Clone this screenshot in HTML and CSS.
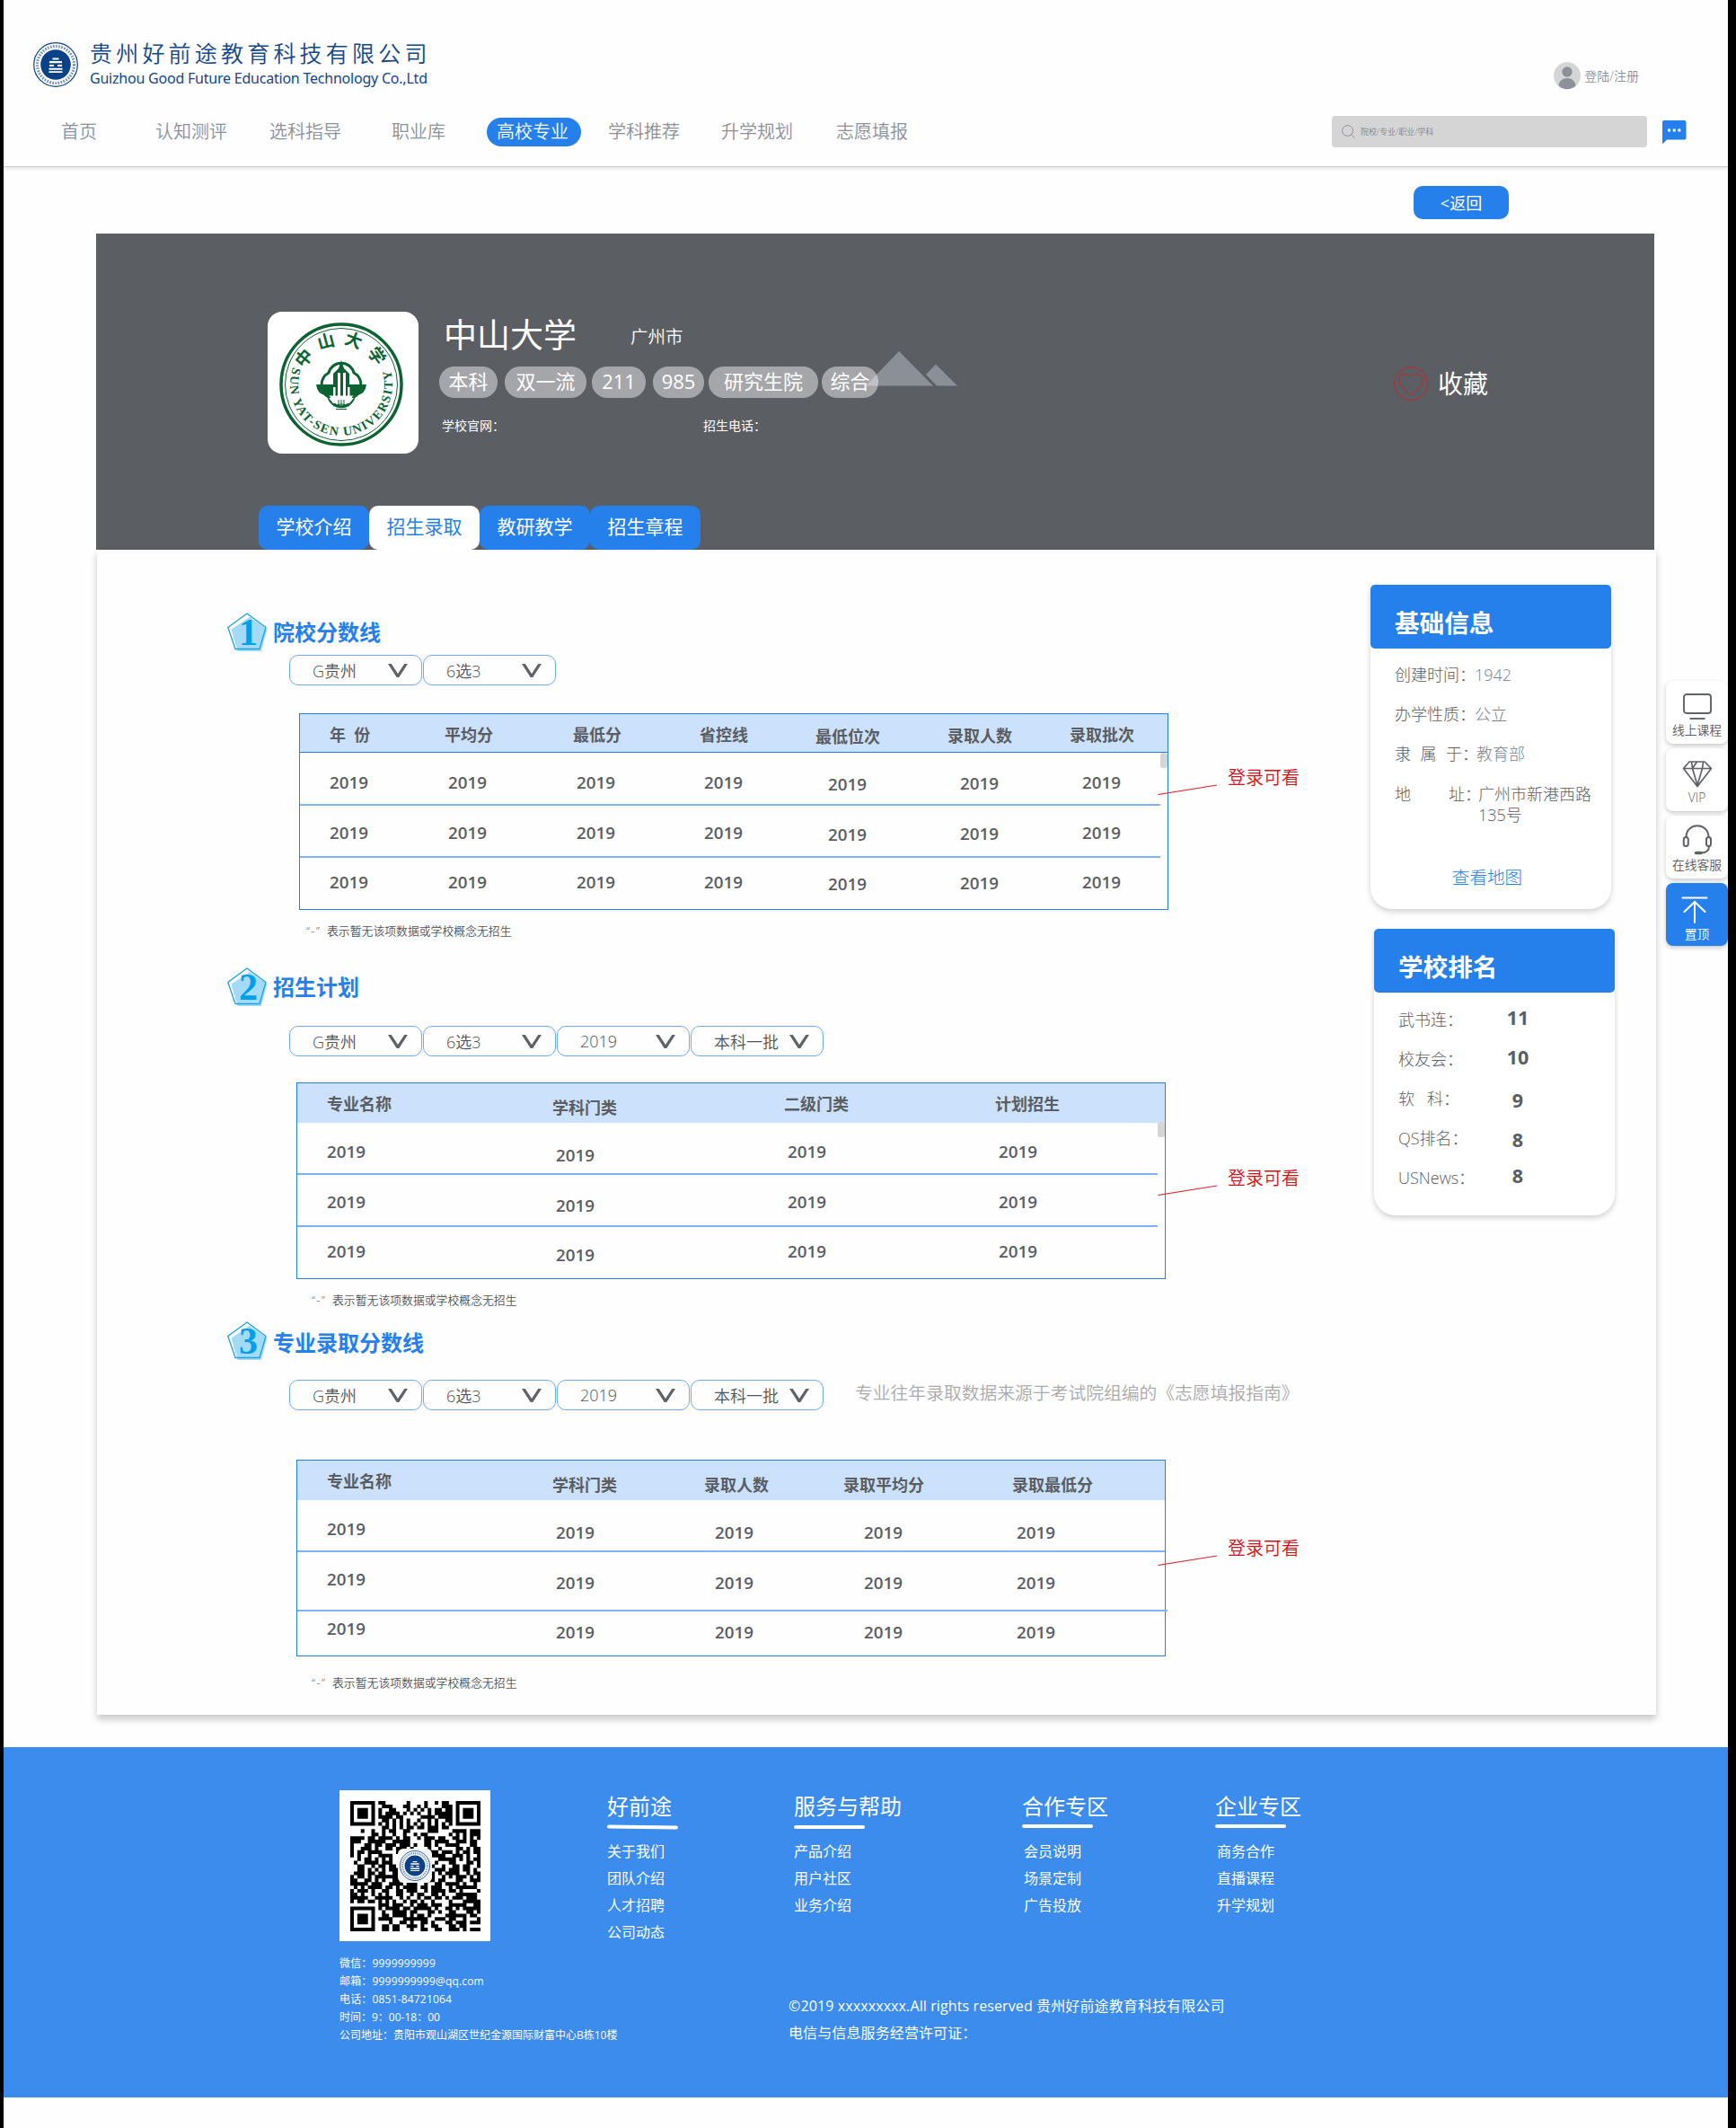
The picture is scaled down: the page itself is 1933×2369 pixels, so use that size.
FILE: index.html
```html
<!DOCTYPE html>
<html lang="zh-CN">
<head>
<meta charset="utf-8">
<title>中山大学 - 招生录取</title>
<link rel="stylesheet" href="styles.css">
</head>
<body>
<svg width="0" height="0" class="defs">
  <defs>
    <symbol id="emblem" viewBox="0 0 50 50">
      <circle cx="25" cy="25" r="24.3" fill="#fff" stroke="#0a4187" stroke-width="1.2"/>
      <circle cx="25" cy="25" r="20.5" fill="none" stroke="#6f8fbb" stroke-width="3.2" stroke-dasharray="1.6 1.5"/>
      <circle cx="25" cy="25" r="16.8" fill="#0a4187"/>
      <path d="M21.500 17.500h7v2h-7zM18 21h14v2.200H18zM18 25h5v2h-5zM27 25h5v2h-5zM17.500 28.800h15v2h-15zM17.500 32.200h15v1.800h-15z" fill="#fff"/>
    </symbol>
    <symbol id="pentagon" viewBox="0 0 46 44">
      <path d="M25 5L44.500 18.500L38 43H11.500L4.500 18.500Z" fill="#a3daf6"/>
      <path d="M22 1L43 16.500L36 40.500H9L.8 16.500Z" fill="none" stroke="#1ea2de" stroke-width="1.300"/>
    </symbol>
    <symbol id="chev" viewBox="0 0 22 15"><path d="M0 0h3.800l7.200 11L18.300 0H22L12.300 15H9.700Z" fill="#5f6266"/></symbol>
  </defs>
</svg>
<div class="page">
  <header class="header">
    <div class="brand">
      <svg class="brand-logo"><use href="#emblem"/></svg>
      <div class="brand-text">
        <div class="brand-cn">贵州好前途教育科技有限公司</div>
        <div class="brand-en">Guizhou Good Future Education Technology Co.,Ltd</div>
      </div>
    </div>
    <a class="login">
      <svg width="30" height="31" viewBox="0 0 30 31"><circle cx="15" cy="15.300" r="15" fill="#d5d5d5"/><circle cx="15" cy="11" r="5.700" fill="#8b9099"/><path d="M5.500 26.500C6 21 10 18 15 18s9 3 9.500 8.500Q20 30.300 15 30.300T5.500 26.500Z" fill="#8b9099"/></svg>
      <span>登陆/注册</span>
    </a>
  </header>
  <nav class="nav">
    <a>首页</a><a>认知测评</a><a>选科指导</a><a>职业库</a><a class="on">高校专业</a><a>学科推荐</a><a>升学规划</a><a>志愿填报</a>
    <div class="search">
      <svg width="15" height="15" viewBox="0 0 15 15" fill="none" stroke="#8b9099"><circle cx="6.500" cy="6.500" r="5.900"/><path d="M10.700 10.700L14.300 14.500"/></svg>
      <span>院校/专业/职业/学科</span>
    </div>
    <svg class="chat" width="27" height="27" viewBox="0 0 27 27"><path d="M2 0h22.500a2 2 0 0 1 2 2v17.500a2 2 0 0 1-2 2H5L0 26.500V2a2 2 0 0 1 2-2Z" fill="#2680eb"/><path d="M6 9.500h3v3H6zM11.700 9.500h3v3h-3zM17.300 9.500h3v3h-3z" fill="#fff"/></svg>
  </nav>
  <div class="back-row"><a class="back">&lt;返回</a></div>

  <section class="banner">
    <div class="school">
      <div class="seal">
        <svg width="168" height="158" viewBox="0 0 168 158">
          <g fill="none" stroke="#0b6332">
            <circle cx="82" cy="81" r="67" stroke-width="3.500"/>
            <circle cx="82" cy="81" r="62.500" stroke-width="1"/>
          </g>
          <path d="M68 68a14.500 14.500 0 0 1 28 0a15.500 15.500 0 0 1 0 27a14.500 14.500 0 0 1-28 0a15.500 15.500 0 0 1 0-27Z" fill="#fff" stroke="#0b6332" stroke-width="3"/>
          <path d="M54 81h19V69l6-6 3-9 3 9 6 6v12h19q-1 11-12 12.500H66Q55 92 54 81Z" fill="#0b6332"/>
          <path d="M78 68h3v28h-3zM84 68h3v28h-3zM73 84h2.500v12H73zM89 84h2.500v12H89zM68 96h28l-5 6H73Z" fill="#fff"/>
          <path d="M73 105q9-4 18 0M76 108.500h12M79 98v6M82 98v6M85 98v6" stroke="#0b6332" fill="none"/>
          <path id="arc-top" d="M38 81a44 44 0 0 1 88 0" fill="none"/>
          <path id="arc-bottom" d="M29.400 59A57 57 0 1 0 134.600 59" fill="none"/>
          <text class="seal-cn"><textPath href="#arc-top" startOffset="17">中山大学</textPath></text>
          <text class="seal-en"><textPath href="#arc-bottom" startOffset="3" textLength="214">SUN YAT-SEN UNIVERSITY</textPath></text>
        </svg>
      </div>
      <div class="school-info">
        <div class="name-row"><h1>中山大学</h1><span>广州市</span></div>
        <div class="tags">
          <svg class="hills" width="104" height="40" viewBox="0 0 104 40"><path d="M37 0L75 38.500H0ZM67 26L78 14.500L102 38.500H79Z" fill="#8b8f97"/></svg>
          <span>本科</span><span>双一流</span><span>211</span><span>985</span><span>研究生院</span><span>综合</span>
        </div>
        <div class="contacts"><span>学校官网：</span><span>招生电话：</span></div>
      </div>
      <div class="fav">
        <svg width="38" height="38" viewBox="0 0 38 38" fill="none" stroke="#c1272d"><circle cx="19" cy="19" r="18.300"/><path d="M19 32L8.500 22.500C3.500 17 5.500 8.500 12 8.500C15.500 8.500 17.500 9.500 19 11.500C20.500 9.500 22.500 8.500 26 8.500C32.500 8.500 34.500 17 29.500 22.500Z"/></svg>
        <span>收藏</span>
      </div>
    </div>
    <div class="tabs"><a>学校介绍</a><a class="on">招生录取</a><a>教研教学</a><a>招生章程</a></div>
  </section>

  <div class="panel">
    <main class="main">
      <section class="block">
        <h2><span class="badge"><svg width="46" height="44"><use href="#pentagon"/></svg><b>1</b></span>院校分数线</h2>
        <div class="filters"><span>G贵州<svg><use href="#chev"/></svg></span><span>6选3<svg><use href="#chev"/></svg></span></div>
        <div class="table t1">
          <div class="head"><span>年&nbsp; 份</span><span>平均分</span><span>最低分</span><span>省控线</span><span>最低位次</span><span>录取人数</span><span>录取批次</span></div>
          <div class="row"><span>2019</span><span>2019</span><span>2019</span><span>2019</span><span>2019</span><span>2019</span><span>2019</span></div>
          <div class="row"><span>2019</span><span>2019</span><span>2019</span><span>2019</span><span>2019</span><span>2019</span><span>2019</span></div>
          <div class="row"><span>2019</span><span>2019</span><span>2019</span><span>2019</span><span>2019</span><span>2019</span><span>2019</span></div>
          <i class="thumb"></i>
          <div class="callout"><svg width="67" height="12" viewBox="0 0 67 12"><path d="M.5 11.500L66 1" stroke="#d8262b" stroke-width="1.200"/></svg><span>登录可看</span></div>
        </div>
        <p class="note"><span>“-”</span>表示暂无该项数据或学校概念无招生</p>
      </section>

      <section class="block second">
        <h2><span class="badge"><svg width="46" height="44"><use href="#pentagon"/></svg><b>2</b></span>招生计划</h2>
        <div class="filters"><span>G贵州<svg><use href="#chev"/></svg></span><span>6选3<svg><use href="#chev"/></svg></span><span>2019<svg><use href="#chev"/></svg></span><span class="wide">本科一批<svg><use href="#chev"/></svg></span></div>
        <div class="table t2">
          <div class="head"><span>专业名称</span><span>学科门类</span><span>二级门类</span><span>计划招生</span></div>
          <div class="row"><span>2019</span><span>2019</span><span>2019</span><span>2019</span></div>
          <div class="row"><span>2019</span><span>2019</span><span>2019</span><span>2019</span></div>
          <div class="row"><span>2019</span><span>2019</span><span>2019</span><span>2019</span></div>
          <i class="thumb"></i>
          <div class="callout"><svg width="67" height="12" viewBox="0 0 67 12"><path d="M.5 11.500L66 1" stroke="#d8262b" stroke-width="1.200"/></svg><span>登录可看</span></div>
        </div>
        <p class="note"><span>“-”</span>表示暂无该项数据或学校概念无招生</p>
      </section>

      <section class="block third">
        <h2><span class="badge"><svg width="46" height="44"><use href="#pentagon"/></svg><b>3</b></span>专业录取分数线</h2>
        <div class="filters"><span>G贵州<svg><use href="#chev"/></svg></span><span>6选3<svg><use href="#chev"/></svg></span><span>2019<svg><use href="#chev"/></svg></span><span class="wide">本科一批<svg><use href="#chev"/></svg></span><em>专业往年录取数据来源于考试院组编的《志愿填报指南》</em></div>
        <div class="table t3">
          <div class="head"><span>专业名称</span><span>学科门类</span><span>录取人数</span><span>录取平均分</span><span>录取最低分</span></div>
          <div class="row"><span>2019</span><span>2019</span><span>2019</span><span>2019</span><span>2019</span></div>
          <div class="row"><span>2019</span><span>2019</span><span>2019</span><span>2019</span><span>2019</span></div>
          <div class="row"><span>2019</span><span>2019</span><span>2019</span><span>2019</span><span>2019</span></div>
          <div class="callout"><svg width="67" height="12" viewBox="0 0 67 12"><path d="M.5 11.500L66 1" stroke="#d8262b" stroke-width="1.200"/></svg><span>登录可看</span></div>
        </div>
        <p class="note"><span>“-”</span>表示暂无该项数据或学校概念无招生</p>
      </section>
    </main>
    <aside class="aside">
      <section class="card basic">
        <h3>基础信息</h3>
        <dl>
          <dt><i>创</i><i>建</i><i>时</i><i>间</i></dt><dd>1942</dd>
          <dt><i>办</i><i>学</i><i>性</i><i>质</i></dt><dd>公立</dd>
          <dt class="w3"><i>隶</i><i>属</i><i>于</i></dt><dd class="w3">教育部</dd>
          <dt class="w2"><i>地</i><i>址</i></dt><dd class="addr">广州市新港西路<br>135号</dd>
        </dl>
        <a class="map">查看地图</a>
      </section>
      <section class="card rank">
        <h3>学校排名</h3>
        <ul>
          <li><span>武书连：</span><b>11</b></li>
          <li><span>校友会：</span><b>10</b></li>
          <li><span>软&nbsp;&nbsp; 科：</span><b>9</b></li>
          <li><span>QS排名：</span><b>8</b></li>
          <li><span>USNews：</span><b>8</b></li>
        </ul>
      </section>
    </aside>
  </div>

  <div class="float">
    <a><svg width="34" height="30" viewBox="0 0 34 30" fill="none" stroke="#5f6266" stroke-width="1.900"><rect x="2" y="1" width="30" height="21" rx="3"/><path d="M8.500 28h17"/></svg>线上课程</a>
    <a><svg width="34" height="30" viewBox="0 0 34 30" fill="none" stroke="#5f6266" stroke-width="1.700" stroke-linejoin="round"><path d="M8 1h17l7.500 7.500L17 28.500L1.500 8.500ZM1.500 8.500h31M10.500 1l1 7.500L17 27l5.500-18.500l1-7.500M11.500 8.500l5-7.500M22.500 8.500"/></svg>VIP</a>
    <a><svg width="34" height="34" viewBox="0 0 34 34" fill="none" stroke="#5f6266" stroke-width="2"><path d="M4.500 14C4.500-3 29.500-3 29.500 14M30 24C30 30 25 31.500 21 31.500"/><rect x="1.800" y="14" width="5" height="10" rx="2.500"/><rect x="27" y="14" width="5" height="10" rx="2.500"/><path d="M15.500 31.500h5.500" stroke-width="3.500" stroke-linecap="round"/></svg>在线客服</a>
    <a class="top"><svg width="30" height="30" viewBox="0 0 30 30" fill="none" stroke="#fff" stroke-width="2" stroke-linecap="round"><path d="M1.500 1.500h27M15 6.500V29M3.500 17L15 6l11.500 11"/></svg>置顶</a>
  </div>

  <footer class="footer">
    <div class="reach">
      <div class="qr"><svg id="qr" viewBox="0 0 37 37" width="145" height="145"></svg><span><svg width="34" height="34"><use href="#emblem"/></svg></span></div>
      <p class="id">微信：9999999999</p><p class="id">邮箱：9999999999@qq.com</p><p class="id">电话：0851-84721064</p><p>时间：9：00-18：00</p><p>公司地址：贵阳市观山湖区世纪金源国际财富中心B栋10楼</p>
    </div>
    <div class="links">
      <div class="cols">
        <div class="tilt"><h4>好前途</h4><a>关于我们</a><a>团队介绍</a><a>人才招聘</a><a>公司动态</a></div>
        <div><h4>服务与帮助</h4><a>产品介绍</a><a>用户社区</a><a>业务介绍</a></div>
        <div class="in"><h4>合作专区</h4><a>会员说明</a><a>场景定制</a><a>广告投放</a></div>
        <div class="in"><h4>企业专区</h4><a>商务合作</a><a>直播课程</a><a>升学规划</a></div>
      </div>
      <p>©2019 xxxxxxxxx.All rights reserved 贵州好前途教育科技有限公司</p>
      <p>电信与信息服务经营许可证：</p>
    </div>
  </footer>
</div>
<script src="qr.js"></script>
</body>
</html>
```
FILE: qr.js
```js
// QR modules, one string per row: '#' is a dark module.
const rows = [
  '#######.##......#....#..#.##..#######',
  '#.....#..###...##..#.#....###.#.....#',
  '#.###.#.#..##...#.#.#.#.##.##.#.###.#',
  '#.###.#.#.####.#.#.#..#.#####.#.###.#',
  '#.###.#.####.##.....####.####.#.###.#',
  '#.....#..##.#.#.#..#..#.#..##.#.....#',
  '#######.#.#.#.#.#.#.#.#.#.#.#.#######',
  '.........##.#.#.##.##.###.##.........',
  '...#..#..#.##..##.....###....####.###',
  '......##.#..#..#..#.##......#.#.#.###',
  '####.##.####.#.##..#.###.##..##.#.#.#',
  '###..#####..#####....##.####..###.##.',
  '#...##.##.###.###.#..##.#..####...##.',
  '#..###.#..##.###.#....#..#....##.#.##',
  '#.##.####....#........###.###.#.##.##',
  '#.#..#..####..........#####..###.#..#',
  '..#.##.#.#.#..........#..#####.#.#.##',
  '.#..####.###..........#.#...##...##.#',
  '..##..#.##.##.........##..#..##.##..#',
  '..##.#.#.#.###........#.###.###.##.#.',
  '.###.##.##..##........##.#.####..#.##',
  '#.##.#.#######........##..#.#.###.#.#',
  '##..##.#.#..##........##.##...##..###',
  '#####.###..####.###..#..##.####.#..#.',
  '.#.#.####.##.#.####.##.###..#.######.',
  '#.###.#..##..##.###..#.####.##.#....#',
  '##.#..#.#.#..##..#.##..##.#...######.',
  '#####..#####..#.#..#.##.##.#.###.###.',
  '#.##.##.#.#.#..#.##.#..#....#...#####',
  '........###.###..#.###.###..#####..##',
  '#######.#.####.##.#####.#..##.#.#####',
  '#.....#..#..####.##...##.#..##...##.#',
  '#.###.#..##.####.#.##.#....######.##.',
  '#.###.#.####...#######..###.##..#...#',
  '#.###.#....#..##.#..##.#...##.###.###',
  '#.....#..##.##..###.#..##...##.##....',
  '#######..##.##...#..##..##..###.#.###'
];
let d = '';
rows.forEach((row, y) => [...row].forEach((c, x) => { if (c === '#') d += `M${x} ${y}h1.03v1.03h-1.03z`; }));
document.getElementById('qr').innerHTML = `<path d="${d}"/>`;
```
FILE: styles.css
```css
* { box-sizing: border-box; }
body {
  margin: 0;
  background: #000;
  font-family: "Open Sans", "Noto Sans CJK SC", sans-serif;
  color: #5a5d62;
}
h1, h2, h3, h4, p, ul, dl, dd { margin: 0; padding: 0; }
h4 { font-weight: 400; }
i, em { font-style: normal; }
.defs { position: absolute; }
.page { position: relative; width: 1920px; height: 2369px; margin-left: 4px; background: #fefefe; }

.header { display: flex; justify-content: space-between; height: 131px; padding: 47px 99px 0 33px; }
.brand { display: flex; gap: 13px; height: 50px; }
.brand-logo { width: 50px; height: 50px; }
.brand-text { color: #14468a; white-space: nowrap; }
.brand-cn { font-size: 25px; line-height: 25px; letter-spacing: 4.200px; font-weight: 350; }
.brand-en { font-size: 16px; line-height: 18px; margin-top: 6px; font-family: "Noto Sans", sans-serif; letter-spacing: -.22px; }
.login { display: flex; align-items: center; gap: 5px; height: 31px; margin-top: 22px; font-size: 14px; color: #8b9099; font-weight: 350; }
.login span { padding-bottom: 2px; margin-left: -1px; }

.nav {
  display: grid;
  grid-template-columns: 105px 127px 136px 106px 135px 126px 128px 552px 368px 1fr;
  height: 55px;
  padding-left: 64px;
  border-bottom: 1px solid #ccc;
  box-shadow: 0 2px 3px rgba(0, 0, 0, .1);
  font-size: 20px;
  line-height: 31px;
  color: #8b9099;
  font-weight: 350;
}
.nav .on { justify-self: start; height: 32px; width: 105px; padding-left: 11px; border-radius: 16px; background: #2680eb; color: #fff; }
.search { display: flex; align-items: center; gap: 6px; width: 351px; height: 35px; margin-top: -2px; padding-left: 11px; border-radius: 4px; background: #d5d5d5; font-size: 9px; color: #7f848c; }
.chat { margin-top: 3px; }
.back-row { display: flex; justify-content: flex-end; height: 74px; padding: 21px 244px 0 0; }
.back { width: 106px; height: 37px; border-radius: 10px; background: #2680eb; color: #fff; font-size: 18px; line-height: 38px; text-align: center; }

.banner { width: 1735px; height: 352px; margin-left: 103px; padding-top: 87px; background: #5b5e63; color: #fff; }
.school { display: flex; height: 216px; padding-left: 191px; }
.seal { width: 168px; height: 158px; border-radius: 16px; background: #fff; }
.seal-cn { font: 700 19px "Noto Sans CJK SC", sans-serif; letter-spacing: 8px; fill: #0b6332; }
.seal-en { font: 700 14px "Liberation Serif", serif; fill: #0b6332; }
.school-info { width: 1064px; padding-left: 23px; }
.name-row { display: flex; align-items: center; gap: 60px; height: 52px; padding-left: 5px; }
.name-row h1 { font-size: 37px; line-height: 52px; font-weight: 400; }
.name-row span { font-size: 19.500px; font-weight: 350; }
.tags { position: relative; display: flex; margin-top: 9px; font-size: 22px; line-height: 32px; text-align: center; }
.tags span { position: relative; height: 35px; border-radius: 17px; background: rgba(255, 255, 255, .45); }
.tags span:nth-of-type(1) { width: 65px; margin-right: 8px; }
.tags span:nth-of-type(2) { width: 91px; margin-right: 6px; }
.tags span:nth-of-type(3) { width: 60px; margin-right: 8px; }
.tags span:nth-of-type(4) { width: 57px; margin-right: 5px; }
.tags span:nth-of-type(5) { width: 122px; margin-right: 4px; }
.tags span:nth-of-type(6) { width: 63px; }
.hills { position: absolute; left: 475px; top: -17px; }
.contacts { display: grid; grid-template-columns: 291px 1fr; margin-top: 21px; padding-left: 3px; font-size: 14px; line-height: 20px; }
.fav { display: flex; align-items: center; gap: 11px; height: 38px; margin-top: 61px; padding-left: 22px; font-size: 28px; }
.fav span { padding-bottom: 3px; }
.tabs { display: flex; height: 49px; margin-left: 181px; }
.tabs a { width: 123px; border-radius: 10px; background: #2680eb; font-size: 21px; line-height: 47px; text-align: center; }
.tabs .on { background: #fff; color: #2680eb; }

.panel { display: flex; width: 1736px; height: 1297px; margin-left: 104px; background: #fefefe; box-shadow: 0 5px 8px rgba(0, 0, 0, .22); }
.main { width: 1418px; padding: 70px 0 0 145px; }
.block { height: 395px; }
.block.second { height: 394px; }
h2 { display: flex; gap: 5px; height: 43px; font-size: 24px; line-height: 43px; font-weight: 700; color: #2680eb; }
.third h2 { line-height: 48px; }
.badge { position: relative; width: 46px; height: 44px; }
.badge svg { display: block; }
.badge b { position: absolute; left: 0; top: 0; width: 47px; text-align: center; font: 700 42px/45px "Liberation Serif", serif; color: #00a0e9; }
.filters { display: flex; gap: 1px; margin: 4px 0 0 69px; font-size: 18px; color: #505358; font-weight: 350; }
.second .filters, .third .filters { margin-top: 22px; }
.filters > span { display: flex; justify-content: space-between; align-items: center; width: 148px; height: 34px; padding: 0 15px 0 25px; border: 1px solid #6fa9f3; border-radius: 10px; }
.filters svg { width: 22px; height: 15px; }
.filters em { margin-left: 34px; font-size: 19.800px; line-height: 29px; font-weight: 350; color: #aaa; white-space: nowrap; }

.table { position: relative; width: 968px; height: 219px; margin: 31px 0 0 80px; border: 1px solid #2680eb; font-weight: 700; color: #5a5d62; }
.t2 { margin: 29px 0 0 77px; }
.t3 { margin: 55px 0 0 77px; }
.head, .row { display: grid; line-height: 20px; }
.head { height: 44px; padding-top: 13px; background: #cce1fc; font-size: 18px; }
.row { height: 58px; margin-right: 8px; padding-top: 20px; border-bottom: 2px solid #80b3f5; font-size: 18.800px; font-weight: 600; }
.row:nth-child(2) { padding-top: 22px; }
.row:nth-child(4) { height: 57px; padding-top: 17px; border: 0; }
.head span:first-child, .row span:first-child { padding-left: 33px; }
.t1 .head { grid-template-columns: 161px 143px 141px 129px 147px 136px 1fr; height: 43px; border-bottom: 1px solid #2680eb; }
.t1 .row { grid-template-columns: 165px 143px 142px 138px 147px 136px 1fr; }
.t1 .row:nth-child(2) { height: 59px; padding-top: 23px; }
.t1 span:nth-child(5) { padding-top: 2px; }
.t1 span:nth-child(6) { padding-top: 1px; }
.t2 .head { grid-template-columns: 284px 258px 235px 1fr; }
.t2 .row { grid-template-columns: 288px 258px 235px 1fr; }
.t2 span:nth-child(2) { padding-top: 4px; }
.t3 .head { grid-template-columns: 284px 169px 155px 188px 1fr; }
.t3 .row { grid-template-columns: 288px 177px 166px 170px 1fr; margin-right: 0; }
.t3 .row:nth-child(3) { height: 66px; margin-right: -3px; }
.t3 .row:nth-child(4) { height: 49px; padding-top: 9px; }
.t3 span:nth-child(n+2) { padding-top: 4px; }
.thumb { position: absolute; right: 0; top: 43px; width: 8px; height: 17px; border-radius: 3px; background: #d5d5d5; }
.callout { position: absolute; left: 955px; top: 57px; display: flex; gap: 11px; font-size: 20px; line-height: 28px; font-weight: 350; color: #d01218; white-space: nowrap; }
.callout svg { margin-top: 21px; }
.callout span { padding: 0 !important; }
.t2 .callout { left: 958px; top: 92px; }
.t3 .callout { left: 958px; top: 84px; }
.note { display: flex; margin: 14px 0 0 88px; font-size: 12.850px; line-height: 18px; font-weight: 350; color: #505358; }
.note span { width: 23px; letter-spacing: 1.500px; }
.second .note { margin-left: 94px; }
.third .note { margin: 20px 0 0 94px; }

.aside { padding-top: 39px; }
.card { width: 268px; border-radius: 5px 5px 24px 24px; background: #fff; box-shadow: 0 3px 6px rgba(0, 0, 0, .18); font-weight: 300; }
.card h3 { height: 71px; padding: 7px 0 0 27px; border-radius: 5px; background: #2680eb; color: #fff; font-size: 27.600px; line-height: 70px; font-weight: 700; }
.basic { height: 361px; }
.basic dl { display: grid; grid-template-columns: 89px 1fr; grid-auto-rows: 44.200px; height: 230px; padding: 18px 0 0 27px; font-size: 18px; line-height: 23px; }
.basic dt { display: flex; justify-content: space-between; width: 72px; white-space: nowrap; }
.basic dt i { width: 18px; }
.basic dt i:last-child::after { content: "："; }
.basic dt.w3 { width: 75px; }
.basic dt.w2 { width: 78px; }
.basic dd { color: #7d8189; white-space: nowrap; }
.basic dd.w3 { padding-left: 2px; }
.basic dd.addr { color: #5a5d62; padding-left: 4px; }
.map { display: block; padding-right: 8px; text-align: center; font-size: 19.600px; line-height: 50px; color: #2680eb; }
.rank { height: 319px; margin: 22px 0 0 4px; }
.rank ul { padding: 19px 0 0 27px; list-style: none; }
.rank li { display: grid; grid-template-columns: 120px 26px; height: 44px; font-size: 18px; line-height: 22px; }
.rank b { margin-top: -2px; text-align: center; font-size: 21.500px; font-weight: 700; }
.rank li:nth-child(n+3) b { margin-top: 2px; }
.rank li:last-child b { margin-top: -2px; }

.float { position: absolute; left: 1851px; top: 758px; display: grid; grid-auto-rows: 70px; gap: 5px; width: 69px; }
.float a { display: flex; flex-direction: column; align-items: center; justify-content: flex-end; padding-bottom: 6px; border-radius: 8px; background: #fff; box-shadow: 0 2px 5px rgba(0, 0, 0, .22); font-size: 13.800px; line-height: 18px; font-weight: 350; }
.float svg { margin-bottom: 2px; }
.float .top { background: #2680eb; color: #fff; padding-bottom: 4px; }
.float .top svg { margin: 0 5px 3px 0; }

.footer { display: flex; height: 390px; margin-top: 36px; padding: 48px 0 0 374px; background: #3b8ced; color: #fff; }
.reach { width: 298px; font-size: 12px; line-height: 20px; white-space: nowrap; }
.reach .id { letter-spacing: .18px; }
.qr { display: grid; place-items: center; width: 168px; height: 168px; margin-bottom: 15px; background: #fff; }
.qr > * { grid-area: 1 / 1; }
.qr span { display: grid; place-items: center; width: 38px; height: 38px; border-radius: 6px; background: #f5f5f5; }
.cols { display: grid; grid-template-columns: 208px 254px 215px 120px; height: 225px; }
.cols h4 { position: relative; height: 53px; font-size: 24px; line-height: 36px; white-space: nowrap; }
.cols h4::after { content: ""; position: absolute; left: 0; top: 39px; width: 79px; height: 4px; border-radius: 2px; background: #fff; }
.cols .tilt h4::after { top: 39px; transform: rotate(.8deg); }
.cols a { display: block; font-size: 16px; line-height: 30px; }
.cols .in a { padding-left: 2px; }
.cols .in h4::after { top: 38px; }
.links p { padding-left: 202px; font-size: 16px; line-height: 30px; letter-spacing: .11px; }
```
